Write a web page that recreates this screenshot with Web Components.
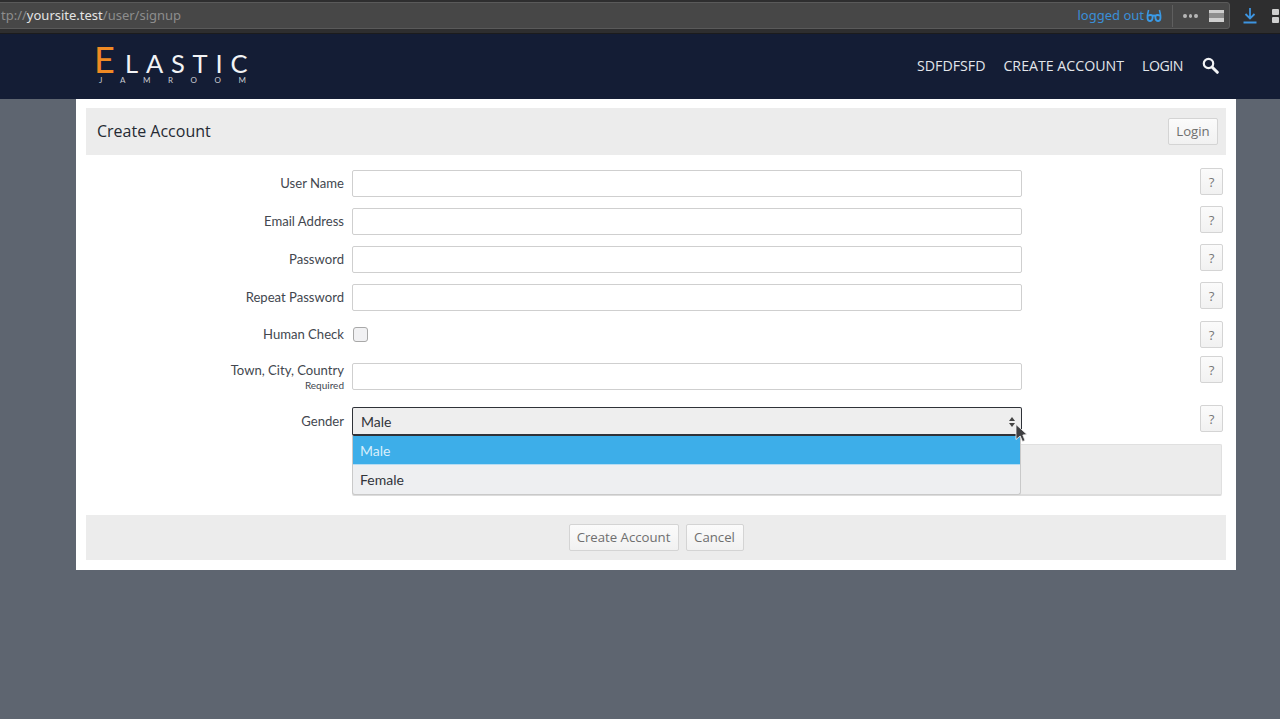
<!DOCTYPE html>
<html>
<head>
<meta charset="utf-8">
<title>Create Account</title>
<style>
html, body { margin: 0; padding: 0; height: 100%; }
body { background: #5e6570; font-family: "Open Sans", "Noto Sans", sans-serif; overflow: hidden; }
</style>
</head>
<body>
<browser-bar></browser-bar>
<site-header></site-header>
<signup-card>
    <form-row label="User Name"><text-field></text-field></form-row>
    <form-row label="Email Address"><text-field></text-field></form-row>
    <form-row label="Password"><text-field></text-field></form-row>
    <form-row label="Repeat Password"><text-field></text-field></form-row>
    <form-row label="Human Check" kind="check"><check-box></check-box></form-row>
    <form-row label="Town, City, Country" sub="Required" kind="town"><text-field></text-field></form-row>
    <form-row label="Gender" kind="gender"><gender-select></gender-select></form-row>
</signup-card>
<script>
// browser chrome strip on top of the page
class BrowserBar extends HTMLElement {
    constructor() {
        super();
        this.attachShadow({ mode: 'open' });
        this.shadowRoot.innerHTML = `
            <style>
                :host { display: block; height: 34px; background: #2e2e2f; box-sizing: border-box; padding-top: 2px; border-bottom: 1px solid #1c1c1d; font-family: "Noto Sans", sans-serif; overflow: hidden; }
                .row { display: flex; align-items: flex-start; }
                .url { width: 1240px; height: 27px; margin-left: -10px; flex: none; box-sizing: border-box; background: #474747; border: 1px solid #5a5a5a; border-radius: 3px; display: flex; align-items: center; padding: 0 5px 0 0; font-size: 13px; color: #8d8d8d; }
                .addr { flex: 1; white-space: nowrap; margin-left: 10px; padding-bottom: 1px; }
                .addr b { font-weight: 400; color: #e4e4e4; }
                .logged { color: #3a8fd8; font-size: 13px; margin-right: 2px; padding-bottom: 1px; }
                .sep { width: 1px; height: 22px; background: #5f5f5f; margin: 0 10px; }
                .dots { width: 15px; margin-right: 11px; display: flex; gap: 2px; }
                .dots i { width: 4px; height: 4px; border-radius: 50%; background: #b5b5b5; }
                .side { width: 15px; height: 12px; background: linear-gradient(#cfcfcf 0 3px, #8e8e8e 3px 8px, #cfcfcf 8px); }
                .dl { margin: 5px 0 0 13px; flex: none; }
                .grid { margin: 7px 0 0 15px; display: grid; grid-template-columns: 7px 7px; gap: 2px; flex: none; }
                .grid i { width: 7px; height: 6px; background: #d0d0d0; border-radius: 1px; }
            </style>
            <div class="row">
                <div class="url">
                    <span class="addr">tp://<b>yoursite.test</b>/user/signup</span>
                    <span class="logged">logged out</span>
                    <svg width="16" height="14" viewBox="0 0 16 14" fill="none" stroke="#3a9ae6"><path d="M2.6 1 L1.4 6 M13.4 1 L14.6 6" stroke-width="1.5"/><path d="M1.6 6.6 Q5 5.4 6.6 6.8 Q7 11.6 4 12 Q1 12.2 1.6 6.6 Z M14.4 6.6 Q11 5.4 9.4 6.8 Q9 11.6 12 12 Q15 12.2 14.4 6.6 Z M6.6 7 Q8 6 9.4 7" stroke-width="1.9"/></svg>
                    <span class="sep"></span>
                    <span class="dots"><i></i><i></i><i></i></span>
                    <span class="side"></span>
                </div>
                <svg class="dl" width="14" height="18" viewBox="0 0 14 18"><path d="M7 1 V11 M2.5 7 L7 11.5 L11.5 7 M0.5 15.5 H13.5" stroke="#3d94e0" stroke-width="1.8" fill="none"/></svg>
                <div class="grid"><i></i><i></i><i></i><i></i></div>
            </div>
        `;
    }
}

class SiteHeader extends HTMLElement {
    constructor() {
        super();
        this.attachShadow({ mode: 'open' });
        this.shadowRoot.innerHTML = `
            <style>
                :host { display: flex; height: 65px; background: #141d35; align-items: center; box-sizing: border-box; padding: 0 61px 2px 94px; font-family: "Open Sans", sans-serif; }
                .logo { display: grid; grid-template-columns: 31px auto; font-family: "Lato", "Liberation Sans", sans-serif; margin-top: -2px; }
                .e { font-size: 36px; line-height: 27px; height: 27px; color: #f08a24; }
                .lastic { font-size: 25.5px; line-height: 20px; height: 20px; align-self: end; color: #f2f3f5; letter-spacing: 7.8px; white-space: nowrap; }
                .jam { grid-column: 1 / 3; font-size: 8px; line-height: 8px; margin: 3px 0 0 5px; color: #c9ccd2; letter-spacing: 17.6px; white-space: nowrap; }
                nav { margin-left: auto; display: flex; align-items: center; font-size: 14.2px; color: #e3e6ea; gap: 18px; }
                .login { letter-spacing: -0.5px; }
                svg { margin-left: 1px; display: block; }
            </style>
            <div class="logo"><span class="e">E</span><span class="lastic">LASTIC</span><span class="jam">JAMROOM</span></div>
            <nav>
                <span>SDFDFSFD</span><span>CREATE ACCOUNT</span><span class="login">LOGIN</span>
                <svg width="17" height="17" viewBox="0 0 17 17"><circle cx="6.5" cy="6.5" r="4.7" fill="none" stroke="#f2f3f5" stroke-width="2.2"/><path d="M10 10 L15.3 15.3" stroke="#f2f3f5" stroke-width="3" stroke-linecap="round"/></svg>
            </nav>
        `;
    }
}

// grey-gradient bootstrap style button, used for Login / Create / Cancel / help
const BTN_CSS = `
    display: inline-flex; align-items: center; justify-content: center; box-sizing: border-box;
    background: linear-gradient(#fbfbfb, #f1f1f1); border: 1px solid #d4d4d4; border-radius: 2px;
    color: #6f6f6f; font-size: 13.2px; font-family: "Open Sans", sans-serif;
`;

class SignupCard extends HTMLElement {
    constructor() {
        super();
        this.attachShadow({ mode: 'open' });
        this.shadowRoot.innerHTML = `
            <style>
                :host { display: block; width: 1160px; height: 471px; margin-left: 76px; box-sizing: border-box; background: #fff; padding: 9px 10px 0; }
                .head { height: 47px; background: #ececec; display: flex; align-items: center; justify-content: space-between; padding: 0 8px 0 11px; box-sizing: border-box; }
                h1 { margin: 0 0 1px; font-size: 16px; font-weight: 400; color: #252a33; }
                .btn { ${BTN_CSS} height: 27px; padding-bottom: 1px; }
                .login { width: 50px; }
                .rows { height: 360px; padding-top: 13px; box-sizing: border-box; }
                .foot { height: 45px; background: #ececec; display: flex; align-items: center; justify-content: center; gap: 7px; }
                .create { width: 110px; }
                .cancel { width: 58px; }
            </style>
            <div class="head"><h1>Create Account</h1><span class="btn login">Login</span></div>
            <div class="rows"><slot></slot></div>
            <div class="foot"><span class="btn create">Create Account</span><span class="btn cancel">Cancel</span></div>
        `;
    }
}

class FormRow extends HTMLElement {
    constructor() {
        super();
        this.attachShadow({ mode: 'open' });
    }

    connectedCallback() {
        const kind = this.getAttribute('kind') || 'text';
        const sub = this.getAttribute('sub');
        // row heights differ a bit per kind, same as the real form
        const heights = { text: 38, check: 41, town: 46, gender: 50 };
        const labelTop = { text: 7, check: 6, town: 1, gender: 6 };
        const helpTop = { text: 0, check: 1, town: -5, gender: -2 };
        this.shadowRoot.innerHTML = `
            <style>
                :host { display: flex; height: ${heights[kind]}px; position: relative; font-family: "Lato", sans-serif; font-size: 13.1px; color: #43474f; }
                .label { width: 258px; text-align: right; line-height: 17px; padding-top: ${labelTop[kind]}px; box-sizing: border-box; flex: none; }
                small { display: block; font-size: 10px; line-height: 13px; }
                .field { width: 670px; margin-left: 8px; flex: none; padding-top: ${kind === 'check' ? 7 : kind === 'gender' ? 0 : 2}px; box-sizing: border-box; }
                .help { ${BTN_CSS} width: 23px; height: 27px; margin-left: 178px; color: #777; margin-top: ${helpTop[kind]}px; }
            </style>
            <div class="label">${this.getAttribute('label')}${sub ? `<small>${sub}</small>` : ''}</div>
            <div class="field"><slot></slot></div>
            <span class="help">?</span>
        `;
    }
}

class TextField extends HTMLElement {
    constructor() {
        super();
        this.attachShadow({ mode: 'open' });
        this.shadowRoot.innerHTML = `
            <style>
                :host { display: block; height: 27px; box-sizing: border-box; background: #fff; border: 1px solid #cfcfcf; border-radius: 2px; }
            </style>
        `;
    }
}

class CheckBox extends HTMLElement {
    constructor() {
        super();
        this.attachShadow({ mode: 'open' });
        this.shadowRoot.innerHTML = `
            <style>
                :host { display: block; width: 15px; height: 15px; margin-left: 1px; box-sizing: border-box; background: #f1f1f3; border: 1px solid #a8a8a8; border-radius: 3px; }
            </style>
        `;
    }
}

class GenderSelect extends HTMLElement {
    constructor() {
        super();
        this.attachShadow({ mode: 'open' });
        this.shadowRoot.innerHTML = `
            <style>
                :host { display: block; position: relative; height: 29px; font-size: 14px; color: #31343a; }
                .box { height: 29px; box-sizing: border-box; background: #eeeeee; border: 1px solid #2f3238; border-bottom-width: 2px; border-radius: 2px; display: flex; align-items: center; padding-left: 8px; }
                .arrows { position: absolute; right: 6px; top: 9px; }
                .notice { position: absolute; left: 0; top: 37px; width: 870px; height: 52px; box-sizing: border-box; background: #ececec; border: 1px solid #e0e0e0; border-bottom: 2px solid #dcdcdc; border-radius: 2px; }
                .menu { position: absolute; left: 0; top: 29px; width: 669px; height: 59px; box-sizing: border-box; background: #eeeff1; border: 1px solid #c9c9c9; border-top: 0; border-radius: 0 0 3px 3px; overflow: hidden; }
                .opt { height: 29px; display: flex; align-items: center; padding-left: 7px; box-sizing: border-box; }
                .on { background: #3daee9; color: #d9eefb; border-bottom: 1px solid #b5dcf3; }
                .cursor { position: absolute; left: 663px; top: 17px; }
            </style>
            <div class="box">Male</div>
            <svg class="arrows" width="8" height="12" viewBox="0 0 8 12"><path d="M4 1 L7 5 H1 Z M1 7 H7 L4 11 Z" fill="#444"/></svg>
            <div class="notice"></div>
            <div class="menu">
                <div class="opt on">Male</div>
                <div class="opt">Female</div>
            </div>
            <svg class="cursor" width="13" height="18" viewBox="0 0 13 18"><path d="M1 0.5 L12 10.5 L7.8 11 L10 16.5 L7.5 17.5 L5.2 12 L1 15.5 Z" fill="#3f3f42" stroke="#f4f4f4" stroke-width="0.8"/></svg>
        `;
    }
}

customElements.define('browser-bar', BrowserBar);
customElements.define('site-header', SiteHeader);
customElements.define('signup-card', SignupCard);
customElements.define('form-row', FormRow);
customElements.define('text-field', TextField);
customElements.define('check-box', CheckBox);
customElements.define('gender-select', GenderSelect);
</script>
</body>
</html>
